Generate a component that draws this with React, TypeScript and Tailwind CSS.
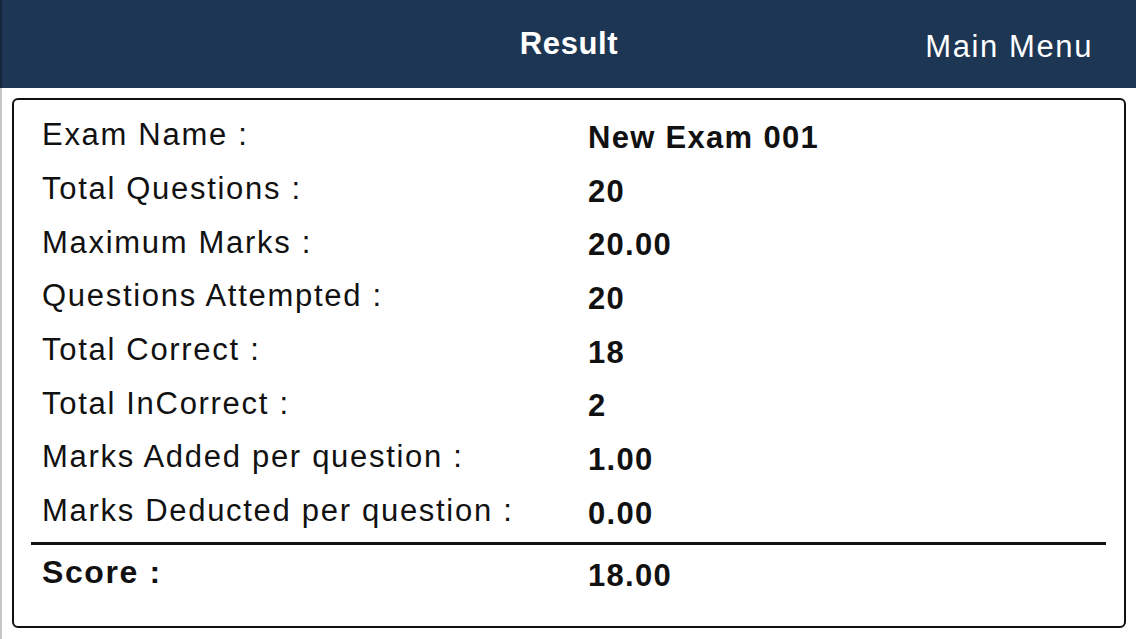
const rows: [string, string][] = [
  ["Exam Name :", "New Exam 001"],
  ["Total Questions :", "20"],
  ["Maximum Marks :", "20.00"],
  ["Questions Attempted :", "20"],
  ["Total Correct :", "18"],
  ["Total InCorrect :", "2"],
  ["Marks Added per question :", "1.00"],
  ["Marks Deducted per question :", "0.00"],
];

export default function App() {
  return (
    <div className="h-[639px] w-[1136px] overflow-hidden bg-white font-['Liberation_Sans',Arial,sans-serif] text-[#111]">
      <header className="relative flex h-[88px] items-center border-l-2 border-[#14263a] bg-[#1c3654] text-white">
        <h1 className="w-full text-center text-[31px] font-bold tracking-[0.6px]">
          Result
        </h1>
        <button className="absolute right-[43px] top-[24px] text-[31px] tracking-[1.6px]">
          Main Menu
        </button>
      </header>

      <div className="h-[551px] border-l-2 border-[#c8c8c8] pt-[10px]">
        <section className="mx-[10px] h-[530px] rounded-[6px] border-2 border-[#111] pt-[8px]">
          <div className="pl-[28px]">
            {rows.map(([label, value]) => (
              <div key={label} className="grid h-[53.7px] grid-cols-[546px_1fr] items-center">
                <span className="text-[31px] leading-none tracking-[1.7px]">{label}</span>
                <span className="pt-[5px] text-[31px] font-bold leading-none tracking-[1.3px]">
                  {value}
                </span>
              </div>
            ))}
          </div>

          <div className="ml-[17px] mr-[18px] mt-[4px] h-[3px] bg-[#111]" />

          <div className="grid h-[56px] grid-cols-[546px_1fr] items-center pl-[28px]">
            <span className="pb-[2px] text-[32px] font-bold leading-none tracking-[1.6px]">Score :</span>
            <span className="pt-[6px] text-[31px] font-bold leading-none tracking-[1.3px]">18.00</span>
          </div>
        </section>
      </div>
    </div>
  );
}
